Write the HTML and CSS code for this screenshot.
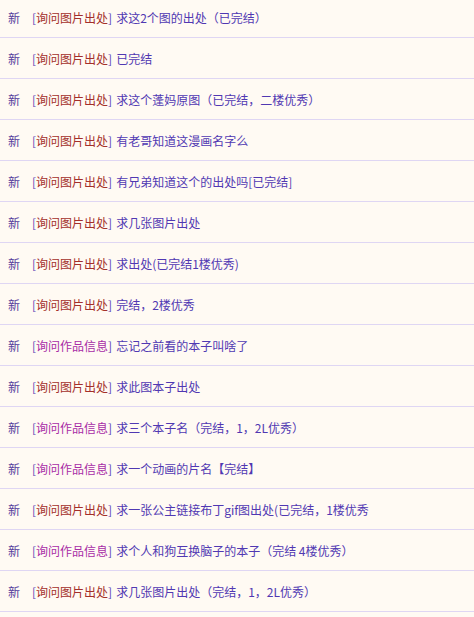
FILE: index.html
```html
<!DOCTYPE html>
<html lang="zh-CN">
<head>
<meta charset="utf-8">
<title>列表</title>
<link rel="stylesheet" href="styles.css">
</head>
<body>
<ul class="list">
  <li class="row"><span class="new">新</span><span class="tag">[<em class="t-pic">询问图片出处</em>]</span><a class="title">求这2个图的出处（已完结）</a></li>
  <li class="row"><span class="new">新</span><span class="tag">[<em class="t-pic">询问图片出处</em>]</span><a class="title">已完结</a></li>
  <li class="row"><span class="new">新</span><span class="tag">[<em class="t-pic">询问图片出处</em>]</span><a class="title">求这个蓬妈原图（已完结，二楼优秀）</a></li>
  <li class="row"><span class="new">新</span><span class="tag">[<em class="t-pic">询问图片出处</em>]</span><a class="title">有老哥知道这漫画名字么</a></li>
  <li class="row"><span class="new">新</span><span class="tag">[<em class="t-pic">询问图片出处</em>]</span><a class="title">有兄弟知道这个的出处吗[已完结]</a></li>
  <li class="row"><span class="new">新</span><span class="tag">[<em class="t-pic">询问图片出处</em>]</span><a class="title">求几张图片出处</a></li>
  <li class="row"><span class="new">新</span><span class="tag">[<em class="t-pic">询问图片出处</em>]</span><a class="title">求出处(已完结1楼优秀)</a></li>
  <li class="row"><span class="new">新</span><span class="tag">[<em class="t-pic">询问图片出处</em>]</span><a class="title">完结，2楼优秀</a></li>
  <li class="row"><span class="new">新</span><span class="tag">[<em class="t-work">询问作品信息</em>]</span><a class="title">忘记之前看的本子叫啥了</a></li>
  <li class="row"><span class="new">新</span><span class="tag">[<em class="t-pic">询问图片出处</em>]</span><a class="title">求此图本子出处</a></li>
  <li class="row"><span class="new">新</span><span class="tag">[<em class="t-work">询问作品信息</em>]</span><a class="title">求三个本子名（完结，1，2L优秀）</a></li>
  <li class="row"><span class="new">新</span><span class="tag">[<em class="t-work">询问作品信息</em>]</span><a class="title">求一个动画的片名【完结】</a></li>
  <li class="row"><span class="new">新</span><span class="tag">[<em class="t-pic">询问图片出处</em>]</span><a class="title">求一张公主链接布丁gif图出处(已完结，1楼优秀</a></li>
  <li class="row"><span class="new">新</span><span class="tag">[<em class="t-work">询问作品信息</em>]</span><a class="title">求个人和狗互换脑子的本子（完结 4楼优秀）</a></li>
  <li class="row"><span class="new">新</span><span class="tag">[<em class="t-pic">询问图片出处</em>]</span><a class="title">求几张图片出处（完结，1，2L优秀）</a></li>
</ul>
</body>
</html>
```
FILE: styles.css
```css
html, body {
  margin: 0;
  padding: 0;
  background: #fffaf3;
}
body {
  font-family: "Noto Sans CJK SC", "Noto Sans", sans-serif;
  font-size: 12px;
  overflow: hidden;
}
.list {
  list-style: none;
  margin: -3px 0 0 0;
  padding: 0;
}
.row {
  height: 40px;
  display: flex;
  align-items: center;
  padding-left: 8px;
  border-bottom: 1px solid #dfd6f3;
  white-space: nowrap;
}
.new {
  color: #553c9c;
  width: 24px;
}
.tag {
  color: #5e46b6;
  margin-right: 4px;
}
.tag em {
  font-style: normal;
}
.t-pic { color: #a32f2a; }
.t-work { color: #a82ca6; }
.title {
  color: #5038b2;
}
```
